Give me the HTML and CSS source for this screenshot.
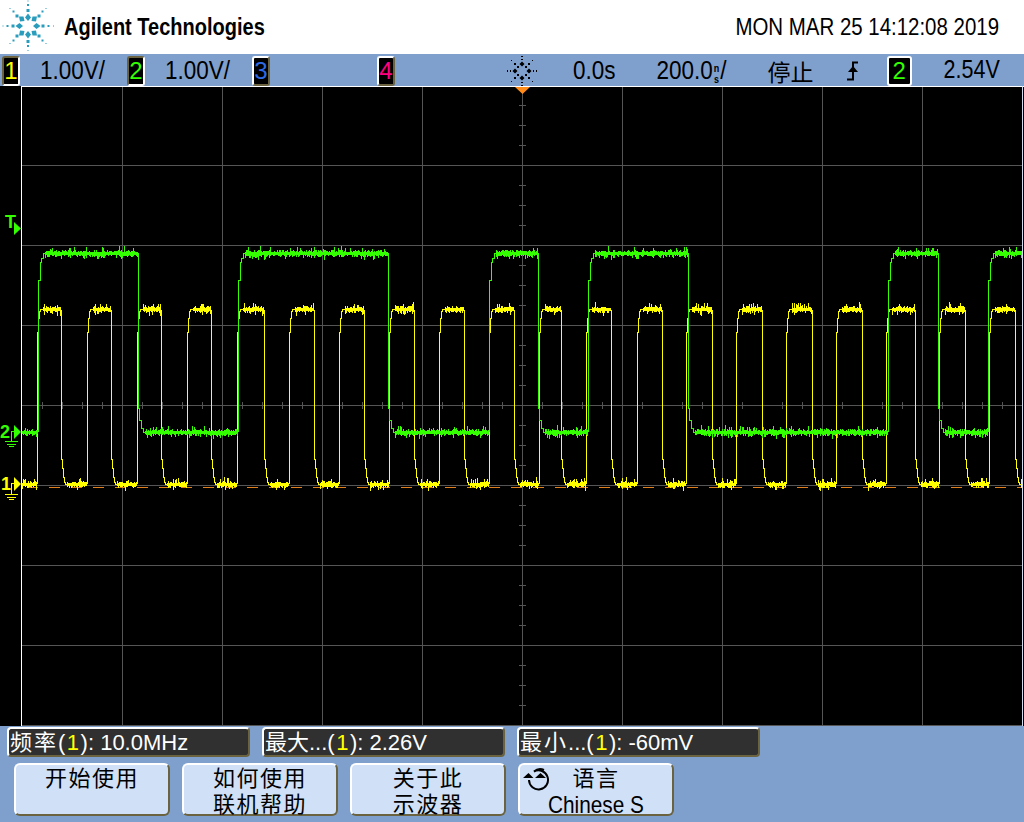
FILE: index.html
```html
<!DOCTYPE html>
<html lang="zh">
<head>
    <meta charset="UTF-8">
    <title>Agilent Technologies</title>
    <link rel="stylesheet" href="styles.css">
</head>
<body>
    <svg class="defs" width="0" height="0">
        <symbol id="spark" viewBox="-28 -26 56 56">
            <!-- inner ring -->
            <path d="M0 -12.5L3 -8.5 0 -5 -3 -8.5ZM0 12.5L3 8.5 0 5 -3 8.5ZM-12.5 0L-8.5 -3 -5 0 -8.5 3ZM12.5 0L8.5 -3 5 0 8.5 3ZM-9 -9.5L-4.5 -9.5 -3.5 -5 -8 -4.5ZM9 -9.5L4.5 -9.5 3.5 -5 8 -4.5ZM-9 9.5L-4.5 9.5 -3.5 5 -8 4.5ZM9 9.5L4.5 9.5 3.5 5 8 4.5Z"/>
            <!-- second ring -->
            <rect x="-1.5" y="-17" width="3" height="3"/><rect x="-1.5" y="14" width="3" height="3"/>
            <rect x="-16.5" y="-1.5" width="3" height="3"/><rect x="13.5" y="-1.5" width="3" height="3"/>
            <rect x="-12.5" y="-11.5" width="3" height="3"/><rect x="9.5" y="-11.5" width="3" height="3"/>
            <rect x="-12.5" y="8.5" width="3" height="3"/><rect x="9.5" y="8.5" width="3" height="3"/>
            <!-- third ring -->
            <rect x="-1" y="-22" width="2" height="2"/><rect x="-1" y="19" width="2" height="2"/>
            <rect x="-21.5" y="-1" width="2" height="2"/><rect x="19.5" y="-1" width="2" height="2"/>
            <rect x="-15.5" y="-15.5" width="2" height="2"/><rect x="13.5" y="-15.5" width="2" height="2"/>
            <rect x="-15.5" y="13.5" width="2" height="2"/><rect x="13.5" y="13.5" width="2" height="2"/>
            <!-- outer ring -->
            <rect x="-.5" y="-25.5" width="1" height="1"/><rect x="-.5" y="24" width="1" height="1"/>
            <rect x="-25.5" y="-.5" width="1" height="1"/><rect x="25" y="-.5" width="1" height="1"/>
            <rect x="-18.5" y="-18" width="1" height="1"/><rect x="17.5" y="-18" width="1" height="1"/>
            <rect x="-18.5" y="17" width="1" height="1"/><rect x="17.5" y="17" width="1" height="1"/>
        </symbol>
    </svg>

    <header class="top-bar">
        <div class="brand">
            <svg class="brand-logo" width="56" height="54"><use href="#spark" width="56" height="56"/></svg>
            <span class="brand-name">Agilent Technologies</span>
        </div>
        <div class="clock">MON MAR 25 14:12:08 2019</div>
    </header>

    <div class="channel-bar">
        <div class="chan-group">
            <span class="badge badge-raised ch1">1</span>
            <span class="chan-scale tall">1.00V/</span>
        </div>
        <div class="chan-group">
            <span class="badge badge-raised ch2">2</span>
            <span class="chan-scale tall">1.00V/</span>
        </div>
        <div class="chan-group">
            <span class="badge badge-sunk ch3">3</span>
        </div>
        <div class="chan-group chan-group-last">
            <span class="badge badge-sunk ch4">4</span>
        </div>
        <svg class="run-logo" width="30" height="30" viewBox="-15 -15 30 30">
            <path d="M0 -9.500L2.500 -7 0 -4.500 -2.500 -7ZM0 9.500L2.500 7 0 4.500 -2.500 7ZM-9.500 0L-7 -2.500 -4.500 0 -7 2.500ZM9.500 0L7 -2.500 4.500 0 7 2.500Z"/>
            <path d="M-5 -5h2v2h-2ZM3 -5h2v2h-2ZM-5 3h2v2h-2ZM3 3h2v2h-2Z"/>
            <path d="M-8 -8h2v2h-2ZM6 -8h2v2h-2ZM-8 6h2v2h-2ZM6 6h2v2h-2Z"/>
            <path d="M-11 -11h1v1h-1ZM10 -11h1v1h-1ZM-11 10h1v1h-1ZM10 10h1v1h-1Z"/>
            <path d="M-1 -15h2v1h-2ZM-1 -12h2v1h-2ZM-1 11h2v1h-2ZM-1 14h2v1h-2Z"/>
            <path d="M-15 -1h1v2h-1ZM-12 -1h1v2h-1ZM11 -1h1v2h-1ZM14 -1h1v2h-1Z"/>
        </svg>
        <span class="time-delay tall">0.0s</span>
        <span class="time-scale tall">200.0<span class="unit-stack">n<br>s</span>/</span>
        <span class="run-state">停止</span>
        <svg class="edge-icon" width="12" height="20" viewBox="0 0 12 20">
            <path d="M0 18.5H6V1.5H11" fill="none" stroke="#000" stroke-width="2"/>
            <path d="M1 11L6 5 11 11Z"/>
        </svg>
        <span class="badge badge-flat ch2">2</span>
        <span class="trigger-level tall">2.54V</span>
    </div>

    <svg class="scope" id="scope" width="1024" height="640" viewBox="0 86 1024 640">
        <path id="grid" class="grid"/>
        <path d="M21.5 86V726M21 86.5H1024" class="frame"/>
        <path d="M1022.5 86V726" class="frame-right"/>
        <path id="level-dash" class="level-dash"/>
        <path id="trace-1" class="trace trace-1"/>
        <path id="trace-2" class="trace trace-2"/>
        <polygon points="515,87 530,87 522.5,94" class="trig-pointer"/>

        <!-- trigger level marker -->
        <text x="5" y="228" class="marker marker-2">T</text>
        <polygon points="14,222 21,228.5 14,235" class="fill-2"/>

        <!-- channel 2 ground -->
        <text x="0" y="438" class="marker marker-2">2</text>
        <polygon points="14,425 21,432 14,439" class="fill-2"/>
        <path d="M14 431.5H11.5V441.5M5 441.5H18M7 444.5H16M9 446.5H14" class="ground-2"/>

        <!-- channel 1 ground -->
        <text x="1" y="490" class="marker marker-1">1</text>
        <polygon points="14,477 21,484 14,491" class="fill-1"/>
        <path d="M14 483.5H11.5V494.5M5 494.5H18M7 497.5H16M9 499.5H14" class="ground-1"/>
    </svg>

    <footer class="bottom-panel">
        <div class="readouts">
            <div class="readout"><span class="label-wide">频率</span>(<span class="ref-1">1</span>): 10.0MHz</div>
            <div class="readout">最大...(<span class="ref-1">1</span>): 2.26V</div>
            <div class="readout"><span class="label-wide">最小</span>...(<span class="ref-1">1</span>): -60mV</div>
        </div>
        <div class="softkeys">
            <div class="softkey">开始使用</div>
            <div class="softkey">如何使用<br>联机帮助</div>
            <div class="softkey">关于此<br>示波器</div>
            <div class="softkey softkey-lang">
                <svg class="lang-icon" width="30" height="24" viewBox="0 0 30 24">
                    <path d="M6 13A9.5 9.5 0 1 0 11 4.500A9.500 9.500 0 0 1 21 3" fill="none" stroke="#000" stroke-width="2"/>
                    <path d="M0 11L5.500 6 10.500 11ZM12 11L17.500 6 23 11Z"/>
                </svg>
                <span class="lang-title">语言</span><br><span class="lang-value">Chinese S</span>
            </div>
        </div>
    </footer>

    <script src="scope.js"></script>
</body>
</html>
```

FILE: styles.css
```css
* {
    box-sizing: border-box;
}
body {
    margin: 0;
    width: 1024px;
    height: 822px;
    overflow: hidden;
    background-color: #7f9fcc;
    font-family: "Liberation Sans", "Noto Sans CJK SC", sans-serif;
    color: #000;
}
.defs {
    display: block;
    height: 0;
}
.top-bar {
    height: 54px;
    background-color: #fff;
    display: flex;
    justify-content: space-between;
    align-items: center;
    padding-right: 25px;
}
.brand {
    display: flex;
    align-items: center;
}
.brand-logo {
    color: #2a9dbd;
    fill: currentColor;
}
.brand-name {
    margin-left: 8px;
    font-size: 20px;
    font-weight: bold;
    transform: scaleY(1.15);
}
.clock {
    font-size: 20.450px;
    transform: scaleY(1.2);
}
.channel-bar {
    height: 32px;
    display: flex;
    align-items: center;
    padding-left: 2px;
    font-size: 22.500px;
    border-top: 1px solid #7f9fcc;
}
.tall {
    transform: scaleY(1.18);
}
.chan-group {
    width: 125px;
    display: flex;
    align-items: center;
}
.chan-group-last {
    width: 130px;
}
.badge {
    width: 18px;
    height: 30px;
    background-color: #000;
    border: 2px solid #fff;
    border-radius: 3px;
    display: flex;
    justify-content: center;
    align-items: center;
    font-size: 24px;
}
.badge-raised {
    border-color: #6b6340 #fff #fff #6b6340;
}
.badge-sunk {
    border-color: #fff #6b6340 #6b6340 #fff;
}
.badge-flat {
    width: 25px;
    margin-left: 28px;
}
.ch1 { color: #ffff00; }
.ch2 { color: #33ff00; }
.ch3 { color: #2e6be6; }
.ch4 { color: #ff0080; }
.chan-scale {
    margin-left: 20px;
}
.run-logo {
    fill: #000;
}
.time-delay {
    margin-left: 36px;
}
.time-scale {
    margin-left: 41px;
    display: flex;
    align-items: center;
}
.unit-stack {
    font-size: 9px;
    line-height: 9px;
    font-weight: bold;
    text-align: center;
    margin: 6px 1px 0;
}
.run-state {
    margin-left: 41px;
    font-size: 23px;
}
.edge-icon {
    margin-left: 33px;
}
.trigger-level {
    margin-left: 32px;
    font-size: 21.500px;
}
.scope {
    display: block;
    background-color: #000;
}
.grid {
    stroke: #555;
    stroke-width: 1;
    fill: none;
    shape-rendering: crispEdges;
}
.frame {
    stroke: #fff;
    stroke-width: 1;
    fill: none;
    shape-rendering: crispEdges;
}
.frame-right {
    stroke: #cfdcf0;
    stroke-width: 1;
    shape-rendering: crispEdges;
}
.level-dash {
    stroke: #e07f1c;
    stroke-width: 1;
    fill: none;
    shape-rendering: crispEdges;
}
.trace {
    fill: none;
    stroke-width: 1;
    shape-rendering: crispEdges;
}
.trace-1 { stroke: #ffff00; }
.trace-2 { stroke: #33ff00; }
.trig-pointer {
    fill: #ff8c1a;
}
.marker {
    font-size: 18px;
    font-family: "Liberation Sans", sans-serif;
    font-weight: bold;
}
.marker-1, .fill-1 { fill: #ffff00; }
.marker-2, .fill-2 { fill: #33ff00; }
.ground-1, .ground-2 {
    fill: none;
    stroke-width: 1;
    shape-rendering: crispEdges;
}
.ground-1 { stroke: #ffff00; }
.ground-2 { stroke: #33ff00; }
.bottom-panel {
    height: 96px;
    padding-top: 1px;
}
.readouts {
    display: flex;
    gap: 12px;
    padding-left: 7px;
}
.readout {
    width: 243px;
    height: 30px;
    padding-left: 1px;
    background-color: #303030;
    border: 2px solid #fff;
    border-color: #fff #6b6340 #6b6340 #fff;
    border-radius: 4px;
    color: #fff;
    font-size: 22px;
    line-height: 27px;
    white-space: nowrap;
}
.label-wide {
    letter-spacing: 2px;
}
.ref-1 {
    color: #ffff00;
    padding: 0 1.500px;
}
.softkeys {
    display: flex;
    gap: 12px;
    padding-left: 14px;
    margin-top: 6px;
}
.softkey {
    position: relative;
    width: 156px;
    height: 53px;
    padding-top: 1px;
    background-color: #cfe0f7;
    border: 2px solid #fff;
    border-color: #fff #6b6340 #6b6340 #fff;
    border-radius: 6px;
    font-size: 22px;
    line-height: 26px;
    letter-spacing: 1.500px;
    text-align: center;
}
.lang-icon {
    position: absolute;
    left: 3px;
    top: 2px;
}
.lang-value {
    display: inline-block;
    font-size: 20.800px;
    letter-spacing: 0;
    transform: scaleY(1.15);
}
```

FILE: scope.js
```js
// Seeded so the noise is the same on every load
let seed = 20190325;
function rnd() {
    seed = (seed * 1664525 + 1013904223) % 4294967296;
    return seed / 4294967296;
}

const GRID_LEFT = 22;
const GRID_RIGHT = 1022;

// Graticule lines and centre ticks
function buildGrid() {
    let d = '';
    for (let x = 122; x < GRID_RIGHT; x += 100) d += `M${x + 0.5} 87V726`;
    for (let y = 165; y <= 725; y += 80) d += `M${GRID_LEFT} ${y + 0.5}H${GRID_RIGHT}`;
    for (let x = 42; x < GRID_RIGHT; x += 20) d += `M${x + 0.5} 402V409`;
    for (let y = 105; y < 725; y += 20) d += `M519 ${y + 0.5}H526`;
    document.getElementById('grid').setAttribute('d', d);
}

function buildLevelDash() {
    let d = '';
    for (let x = 27; x < GRID_RIGHT; x += 22) d += `M${x} 487.5H${Math.min(x + 11, GRID_RIGHT)}`;
    document.getElementById('level-dash').setAttribute('d', d);
}

// Flat top or bottom of a trace: one noisy column per pixel
function noisyRun(x1, x2, y) {
    let d = '';
    for (let x = Math.round(x1); x < x2; x++) {
        const up = 1 + Math.floor(rnd() * 2.5) + (rnd() < 0.15 ? 2 + Math.floor(rnd() * 3) : 0);
        const down = 1 + Math.floor(rnd() * 2.5) + (rnd() < 0.15 ? 2 + Math.floor(rnd() * 2) : 0);
        d += `M${x + 0.5} ${y - up}V${y + down + 1}`;
    }
    return d;
}

// Draw a staircase edge from offsets [dx, y]
function edge(x, steps) {
    let d = `M${x + steps[0][0] + 0.5} ${steps[0][1]}`;
    for (let i = 1; i < steps.length; i++) {
        d += `V${steps[i][1]}H${x + steps[i][0] + 0.5}`;
    }
    return d;
}

const YELLOW_RISE = [[0, 484], [0, 385], [1, 332], [2, 318], [3, 311], [6, 309]];
const YELLOW_FALL = [[0, 310], [0, 439], [1, 459], [2, 468], [3, 477], [4, 482], [6, 484]];
const GREEN_RISE = [[0, 432], [0, 400], [2, 280], [3, 262], [5, 258], [7, 253]];
const GREEN_FALL = [[0, 253], [0, 293], [1, 408], [3, 420], [5, 428], [7, 432]];

function buildTrace(id, start, rises, falls, lowY, highY, riseShape, fallShape, riseLen, fallLen) {
    const edges = [];
    rises.forEach(x => edges.push({ x: x, rise: true }));
    falls.forEach(x => edges.push({ x: x, rise: false }));
    edges.sort((a, b) => a.x - b.x);

    let d = '';
    let pos = start;
    edges.forEach(e => {
        d += noisyRun(pos, e.x, e.rise ? lowY : highY);
        d += edge(e.x, e.rise ? riseShape : fallShape);
        pos = e.x + (e.rise ? riseLen : fallLen);
    });
    const last = edges[edges.length - 1];
    d += noisyRun(pos, GRID_RIGHT, last.rise ? highY : lowY);
    document.getElementById(id).setAttribute('d', d);
}

buildGrid();
buildLevelDash();

buildTrace('trace-1', GRID_LEFT,
    [37, 87, 137, 187, 237, 289, 339, 389, 439, 489, 539, 586, 637, 686, 736, 786, 836, 886, 939, 989],
    [61, 111, 161, 211, 264, 314, 364, 414, 464, 514, 561, 611, 662, 712, 762, 812, 862, 915, 965, 1015],
    484, 309, YELLOW_RISE, YELLOW_FALL, 6, 6);

buildTrace('trace-2', GRID_LEFT,
    [38, 238, 489, 588, 888, 988],
    [138, 388, 538, 688, 938],
    432, 253, GREEN_RISE, GREEN_FALL, 7, 7);
```
